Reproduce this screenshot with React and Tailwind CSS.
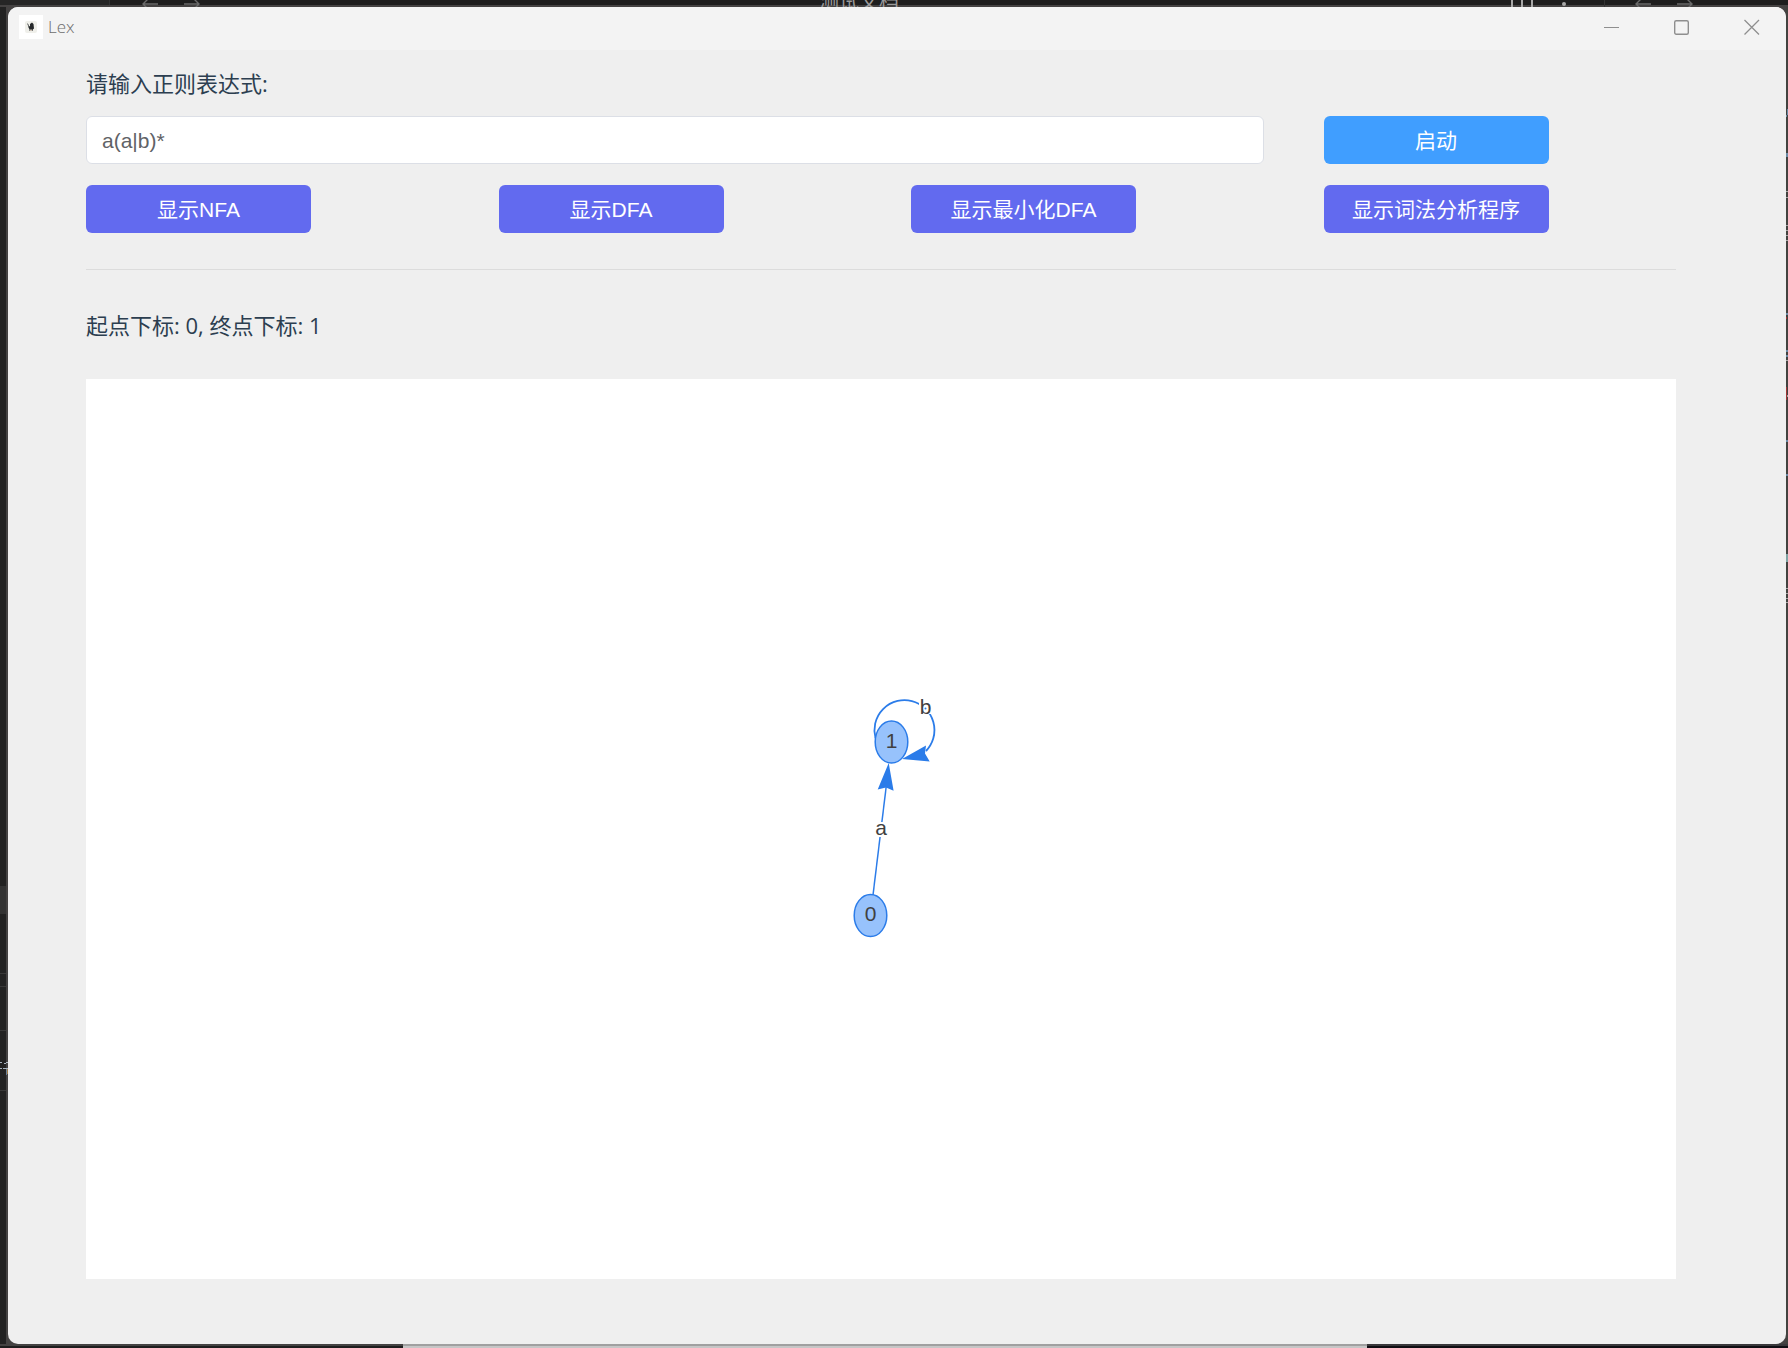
import React, { useState } from "react";

const uiFont = "font-['Open_Sans','Noto_Sans_CJK_SC',sans-serif]";
const controlFont = "font-['Liberation_Sans','Noto_Sans_CJK_SC',sans-serif]";

function ActionButton({ children, primary }) {
  const tone = primary ? "bg-[#409eff]" : "bg-[#626aef]";
  return (
    <button
      type="button"
      className={`${tone} h-12 w-[225px] rounded-md pt-0.5 text-center text-[21px] leading-6 text-white ${controlFont}`}
    >
      {children}
    </button>
  );
}

function BackArrow() {
  return (
    <svg width="16" height="12" viewBox="0 0 16 12" fill="none" stroke="#6a6a6a" strokeWidth="1.4">
      <path d="M6 1 L1 6 L6 11 M1 6 H16" />
    </svg>
  );
}

function ForwardArrow() {
  return (
    <svg width="16" height="12" viewBox="0 0 16 12" fill="none" stroke="#6a6a6a" strokeWidth="1.4">
      <path d="M10 1 L15 6 L10 11 M15 6 H0" />
    </svg>
  );
}

function DesktopTop() {
  return (
    <div
      className={`grid h-[7px] grid-cols-[110px_1fr_184px] overflow-hidden bg-[linear-gradient(#1e1e1e_5px,#444242_5px)] ${uiFont}`}
    >
      <div className="h-[5px] border-r border-[#333] bg-[#262626]" />
      <div className="grid h-[7px] grid-cols-[1fr_auto_1fr]">
        <div className="-mt-0.5 flex gap-[26px] pl-8">
          <BackArrow />
          <ForwardArrow />
        </div>
        <span className="-mt-2.5 pl-1 text-[20px] leading-6 text-[#9a9a9a]">测试文档</span>
        <div className="flex justify-end pr-[37px]">
          <svg width="56" height="7" viewBox="0 0 56 7" fill="#a8a8a8">
            <path d="M0 0h2v7H0zM10 0h2v7h-2zM20 0h2v7h-2z" />
            <circle cx="53" cy="4" r="2" />
          </svg>
        </div>
      </div>
      <div className="-mt-0.5 flex h-3 gap-[26px] border-l border-[#333] pl-[30px]">
        <BackArrow />
        <ForwardArrow />
      </div>
    </div>
  );
}

function DesktopLeft() {
  return (
    <div className="flex w-2 flex-col border-r-2 border-[#444242] bg-[#222]">
      <div className="mt-[879px] h-7 bg-[#333]" />
      <div className="mt-[59px] h-[14px] border-y border-[#383838]" />
      <div className="mt-[43px] h-[61px] border-y border-[#383838] pt-[30px]">
        <svg width="8" height="15" viewBox="0 0 8 15" className="max-w-none" aria-hidden="true">
          <path d="M0 1h2v1H0zM4 2h2v1H4zM6 1h2v1H6zM0 7h2v1H0zM3 7h5v1H3z" fill="#a9b4bf" />
          <path d="M6 8h1v6H6z" fill="#6b8299" />
          <path d="M7 8h1v5H7z" fill="#a07a45" />
        </svg>
      </div>
    </div>
  );
}

function DesktopRight() {
  return (
    <div className="w-0.5 bg-[#42423f]">
      <svg width="2" height="620" viewBox="0 7 2 620" aria-hidden="true">
        <path d="M1 109h1v6H1zM0 115h1v2H0zM0 313h2v2H0zM0 350h2v2H0zM0 355h2v2H0zM0 440h2v2H0zM0 474h2v2H0zM0 153h2v4H0z" fill="#6b8aa5" />
        <path d="M0 191h2v1H0zM0 197h2v1H0zM0 225h2v1H0zM0 230h2v1H0zM0 235h2v1H0zM0 240h2v1H0zM0 360h2v1H0zM0 395h2v2H0zM0 588h2v1H0zM0 593h2v1H0zM0 598h2v1H0zM0 602h2v1H0z" fill="#a5a5a5" />
        <path d="M0 387h1v13H0zM0 317h1v2H0z" fill="#a03434" />
        <path d="M0 554h2v8H0z" fill="#7fa3a3" />
      </svg>
    </div>
  );
}

function TitleBar() {
  return (
    <header className="flex h-[43px] items-start justify-between bg-[#f3f3f3]">
      <div className="flex items-center gap-[5px] pt-2 pl-[11px]">
        <svg width="24" height="24" viewBox="0 0 24 24" aria-hidden="true">
          <rect width="24" height="24" fill="#fff" />
          <rect x="6" y="6" width="12" height="12" rx="2" fill="#efefea" />
          <path d="M8 8 L9.5 9.5 L9.8 11.5 L11 11 L11 9 L13 7.5 L14.5 9 L15 13.5 L13.8 14.5 L13.5 16 H10.5 V14.5 L9.5 12.5 L8.8 10 Z" fill="#25282a" />
          <path d="M11 14.5 h2 v1.5 h-2z" fill="#c9bcae" />
        </svg>
        <h1 className={`text-[17px] leading-6 font-light text-[#6c6c6c] ${uiFont}`}>Lex</h1>
      </div>
      <div className="flex gap-[54px] pt-3 pr-[26px]">
        <button type="button" aria-label="Minimize">
          <svg width="16" height="16" viewBox="0 0 16 16" stroke="#8e8e8e">
            <path d="M0 8.5 H15" />
          </svg>
        </button>
        <button type="button" aria-label="Maximize">
          <svg width="16" height="16" viewBox="0 0 16 16" fill="none" stroke="#8e8e8e" strokeWidth="1.4">
            <rect x="0.7" y="1.7" width="13.6" height="13.6" rx="1.5" />
          </svg>
        </button>
        <button type="button" aria-label="Close">
          <svg width="16" height="16" viewBox="0 0 16 16" fill="none" stroke="#8e8e8e" strokeWidth="1.3">
            <path d="M0.5 1 L15 15.5 M15 1 L0.5 15.5" />
          </svg>
        </button>
      </div>
    </header>
  );
}

function AutomatonGraph() {
  return (
    <svg
      width="120"
      height="300"
      viewBox="821 679 120 300"
      role="img"
      aria-label="NFA"
      className={controlFont}
      fontSize="21"
      textAnchor="middle"
    >
      <g fill="none" stroke="#2b7ce9" strokeWidth="1.5">
        <path d="M873 895 L887 780" />
        <path d="M875.5 738 A30 30 0 1 1 926 751" strokeWidth="1.8" />
      </g>
      <g fill="#2b7ce9">
        <path d="M888.7 763 L893.6 790.7 L886 787.5 L877.7 789.5 Z" />
        <path d="M902 759 L926 745.5 L925 753.5 L929.7 761.5 Z" />
      </g>
      <rect x="874" y="822" width="13" height="15" fill="#fff" />
      <rect x="919" y="698" width="12" height="16" fill="#fff" />
      <circle cx="925.5" cy="708.5" r="1" fill="#2b7ce9" />
      <g fill="#97c2fc" stroke="#2b7ce9" strokeWidth="1.5">
        <ellipse cx="891.5" cy="742" rx="16.3" ry="21" />
        <ellipse cx="870.5" cy="915.5" rx="16.3" ry="21" />
      </g>
      <g fill="#404040">
        <text x="891.5" y="748">1</text>
        <text x="870.5" y="921">0</text>
        <text x="881" y="835">a</text>
        <text x="925.5" y="714">b</text>
      </g>
    </svg>
  );
}

function LexForm() {
  const [pattern, setPattern] = useState("a(a|b)*");
  return (
    <form className="grid grid-cols-4 gap-x-[60px]" onSubmit={(e) => e.preventDefault()}>
      <label
        htmlFor="pattern"
        className={`col-span-4 mb-[17px] text-[22px] leading-8 text-[#2c3e50] ${uiFont}`}
      >
        请输入正则表达式:
      </label>
      <input
        id="pattern"
        type="text"
        value={pattern}
        onChange={(e) => setPattern(e.target.value)}
        className={`col-span-3 h-12 w-full rounded-md border border-[#dcdfe6] bg-white px-[15px] pt-0.5 text-[21px] text-[#606266] outline-none ${controlFont}`}
      />
      <ActionButton primary>启动</ActionButton>
      <div className="col-span-4 mt-[21px] grid grid-cols-4 gap-x-[60px]">
        <ActionButton>显示NFA</ActionButton>
        <ActionButton>显示DFA</ActionButton>
        <ActionButton>显示最小化DFA</ActionButton>
        <ActionButton>显示词法分析程序</ActionButton>
      </div>
    </form>
  );
}

export default function App() {
  return (
    <div className="flex min-h-screen flex-col bg-[#1e1e1e]">
      <DesktopTop />
      <div className="flex flex-1">
        <DesktopLeft />
        <div className="flex flex-1 bg-[#444242]">
          <div className="flex flex-1 flex-col overflow-hidden rounded-[10px] bg-[#efefef]">
            <TitleBar />
            <main className="flex flex-1 flex-col pt-[17px] pr-[110px] pb-[65px] pl-[78px]">
              <LexForm />
              <hr className="mt-9 border-[#dcdcdc]" />
              <p className={`mt-[41px] mb-[39px] text-[22px] leading-[29px] text-[#2c3e50] ${uiFont}`}>
                起点下标: 0, 终点下标: 1
              </p>
              <section className="flex flex-1 items-center justify-center bg-white">
                <AutomatonGraph />
              </section>
            </main>
          </div>
        </div>
        <DesktopRight />
      </div>
      <div className="grid h-1 grid-cols-[403fr_964fr_421fr]">
        <div className="border-t-2 border-[#444242]" />
        <div className="border-t-2 border-[#a0a0a0] bg-[#c6c6c6]" />
        <div className="border-t-2 border-[#39383b] bg-[#0f0e13]" />
      </div>
    </div>
  );
}
